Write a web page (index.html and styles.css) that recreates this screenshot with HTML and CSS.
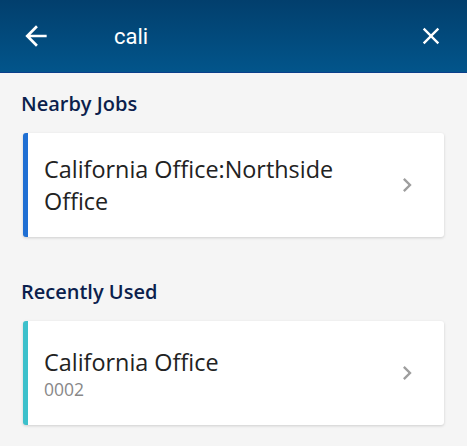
FILE: index.html
```html
<!DOCTYPE html>
<html lang="en">
<head>
  <meta charset="UTF-8">
  <title>Job Search</title>
  <meta name="viewport" content="width=device-width, initial-scale=1.0">
  <link rel="stylesheet" href="styles.css">
</head>
<body>
  <header class="search-bar">
    <button class="icon-btn back" type="button" aria-label="Back">
      <svg viewBox="0 0 24 24" width="32" height="32"><path d="M20 11H7.83l5.59-5.59L12 4l-8 8 8 8 1.41-1.41L7.83 13H20v-2z" fill="#fff"/></svg>
    </button>
    <div class="search-text">cali</div>
    <button class="icon-btn close" type="button" aria-label="Clear">
      <svg viewBox="0 0 24 24" width="28" height="28"><path d="M19 6.41L17.59 5 12 10.59 6.41 5 5 6.41 10.59 12 5 17.59 6.41 19 12 13.41 17.59 19 19 17.59 13.41 12z" fill="#fff"/></svg>
    </button>
  </header>

  <main class="results">
    <section class="group">
      <h2 class="group-title">Nearby Jobs</h2>
      <div class="job-card nearby">
        <div class="job-info">
          <div class="job-name">California Office:Northside Office</div>
        </div>
        <svg class="chevron" viewBox="0 0 24 24" width="28" height="28"><path d="M10 6L8.59 7.41 13.17 12l-4.58 4.59L10 18l6-6z" fill="#9e9e9e"/></svg>
      </div>
    </section>

    <section class="group">
      <h2 class="group-title">Recently Used</h2>
      <div class="job-card recent">
        <div class="job-info">
          <div class="job-name">California Office</div>
          <div class="job-code">0002</div>
        </div>
        <svg class="chevron" viewBox="0 0 24 24" width="28" height="28"><path d="M10 6L8.59 7.41 13.17 12l-4.58 4.59L10 18l6-6z" fill="#9e9e9e"/></svg>
      </div>
    </section>
  </main>
</body>
</html>
```

FILE: styles.css
```css
body {
  margin: 0;
  background: #f5f5f5;
  font-family: "Open Sans", sans-serif;
  color: #222;
}

.search-bar {
  height: 72px;
  display: flex;
  align-items: center;
  background: linear-gradient(#023f6d, #02558b);
  border-bottom: 1px solid #0a3e8a;
}

.icon-btn {
  background: none;
  border: none;
  padding: 0;
  display: flex;
  cursor: pointer;
}

.icon-btn.back {
  margin-left: 20px;
}

.icon-btn.close {
  margin-right: 22px;
}

.search-text {
  flex: 1;
  margin-left: 62px;
  font-family: Roboto, sans-serif;
  font-size: 22px;
  color: #fff;
}

.results {
  padding-top: 19px;
}

.group {
  margin-bottom: 43px;
}

.group-title {
  margin: 0 0 17px 21px;
  font-size: 20px;
  line-height: 24px;
  font-weight: 600;
  color: #0c1f4d;
}

.job-card {
  margin: 0 23px;
  height: 104px;
  box-sizing: border-box;
  display: flex;
  align-items: center;
  background: #fff;
  border-left: 5px solid #1f6fd3;
  border-radius: 3px;
  box-shadow: 0 1px 3px rgba(0, 0, 0, 0.16);
  padding: 0 23px 0 16px;
}

.job-card.recent {
  border-left-color: #3cc0cb;
}

.job-info {
  flex: 1;
  padding-right: 30px;
}

.job-name {
  font-size: 23.4px;
  line-height: 32px;
  color: #222;
}

.recent .job-name {
  line-height: 30px;
}

.job-code {
  margin-top: 2px;
  font-size: 17.5px;
  line-height: 20px;
  color: #888;
}

.chevron {
  flex: none;
}
```
